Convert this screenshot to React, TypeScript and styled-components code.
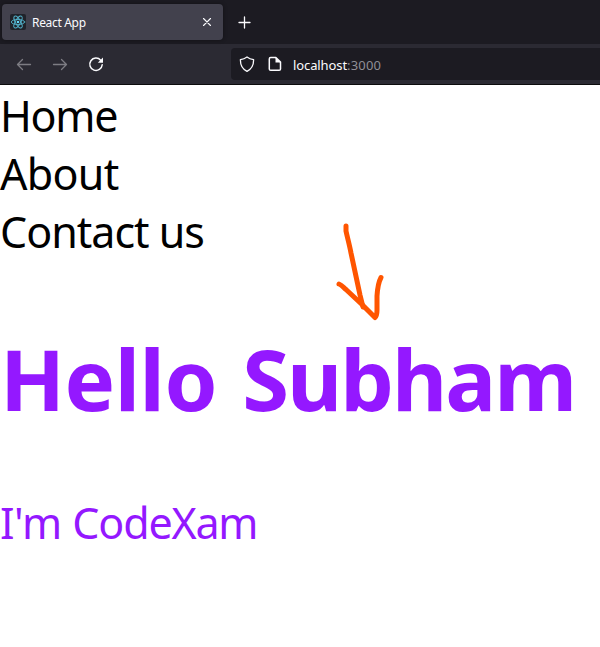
import React from "react";
import styled, { createGlobalStyle } from "styled-components";

const GlobalStyle = createGlobalStyle`
  * { box-sizing: border-box; }
  html, body { margin: 0; background: #fff; overflow: hidden; }
`;

const Window = styled.div`
  position: relative;
  width: 600px;
  height: 647px;
  overflow: hidden;
  background: #fff;
  font-family: "Noto Sans", "Open Sans", sans-serif;
`;

const TabStrip = styled.div`
  display: flex;
  align-items: center;
  height: 44px;
  background: #1c1b22;
`;

const Tab = styled.div`
  display: flex;
  align-items: center;
  width: 221px;
  height: 36px;
  margin-left: 2px;
  padding: 0 8px;
  border-radius: 4px;
  background: #42414d;
  box-shadow: 0 0 4px rgba(0, 0, 0, 0.4);
`;

const TabTitle = styled.span`
  flex: 1;
  margin: 1px 0 0 6px;
  color: #fbfbfe;
  font-size: 12px;
  line-height: 16px;
  letter-spacing: -0.32px;
  white-space: nowrap;
`;

const Toolbar = styled.div`
  display: flex;
  align-items: center;
  height: 41px;
  padding-left: 16px;
  border-bottom: 1px solid #0c0c0d;
  background: #2b2a33;
`;

const NavButtons = styled.div`
  display: flex;
  flex: none;
  gap: 20px;
  width: 215px;
`;

const AddressBar = styled.div`
  display: flex;
  flex: 1;
  align-items: center;
  height: 32px;
  padding-left: 8px;
  border-radius: 4px 0 0 4px;
  background: #1c1b22;
`;

const Icon = styled.svg<{ $dim?: boolean; $gap?: number }>`
  display: block;
  flex: none;
  width: 16px;
  height: 16px;
  margin-left: ${(p) => p.$gap ?? 0}px;
  color: ${(p) => (p.$dim ? "#7d7c83" : "#fbfbfe")};
  fill: none;
  stroke: currentColor;
  stroke-width: 1.3;
  stroke-linecap: round;
  stroke-linejoin: round;
`;

const Url = styled.span`
  margin: 1px 0 0 10px;
  color: #fbfbfe;
  font-size: 13px;
  line-height: 18px;
  letter-spacing: -0.1px;
`;

const Port = styled.span`
  color: #8f8e96;
  letter-spacing: 0.2px;
`;

const Page = styled.main`
  padding-top: 2px;
`;

const Menu = styled.ul`
  margin: 0;
  padding: 0;
  list-style: none;
  color: #000;
`;

const MenuItem = styled.li<{ $spacing: number }>`
  height: 58px;
  font-size: 43px;
  line-height: 58px;
  letter-spacing: ${(p) => p.$spacing}px;
  white-space: nowrap;
`;

const Heading = styled.h1`
  height: 116px;
  margin: 59px 0 58px;
  color: #9418ff;
  font-size: 85px;
  font-weight: 700;
  line-height: 116px;
  letter-spacing: -2px;
  white-space: nowrap;
`;

const Word = styled.span<{ $spacing: number; $before?: number }>`
  margin-left: ${(p) => p.$before ?? 0}px;
  letter-spacing: ${(p) => p.$spacing}px;
`;

const Intro = styled.p`
  margin: 0;
  color: #9418ff;
  font-size: 43px;
  line-height: 58px;
  letter-spacing: -0.5px;
  white-space: nowrap;
`;

const Annotation = styled.svg`
  position: absolute;
  top: 215px;
  left: 330px;
  width: 60px;
  height: 115px;
  fill: none;
  stroke: #ff5500;
  stroke-width: 5;
  stroke-linecap: round;
  stroke-linejoin: round;
`;

const menu = [
  { label: "Home", spacing: -1.3 },
  { label: "About", spacing: -0.7 },
  { label: "Contact us", spacing: -1 },
];

export default function App() {
  return (
    <>
      <GlobalStyle />
      <Window>
        <TabStrip>
          <Tab>
            <Icon viewBox="0 0 16 16">
              <rect width="16" height="16" rx="2" fill="#20232a" stroke="none" />
              <g stroke="#53b5ce" strokeWidth="0.9">
                <ellipse cx="8" cy="8" rx="6.7" ry="2.6" />
                <ellipse cx="8" cy="8" rx="6.7" ry="2.6" transform="rotate(60 8 8)" />
                <ellipse cx="8" cy="8" rx="6.7" ry="2.6" transform="rotate(120 8 8)" />
              </g>
              <circle cx="8" cy="8" r="1.3" fill="#61dafb" stroke="none" />
            </Icon>
            <TabTitle>React App</TabTitle>
            <Icon viewBox="0 0 16 16">
              <path d="M4.5 4.5l7 7M11.5 4.5l-7 7" strokeWidth="1.1" />
            </Icon>
          </Tab>
          <Icon viewBox="0 0 16 16" $gap={14}>
            <path d="M7.5 3v11M2 8.5h11" />
          </Icon>
        </TabStrip>
        <Toolbar>
          <NavButtons>
            <Icon viewBox="0 0 16 16" $dim>
              <path d="M14.5 8.5h-13M6.5 3.5l-5 5 5 5" />
            </Icon>
            <Icon viewBox="0 0 16 16" $dim>
              <path d="M1.5 8.5h13M9.5 3.5l5 5-5 5" />
            </Icon>
            <Icon viewBox="0 0 16 16">
              <path d="M12.7 4.2A6.2 6.2 0 1 0 14.2 8.8" strokeWidth="1.5" />
              <path d="M15 1.600v5.200H9.800z" fill="currentColor" stroke="none" />
            </Icon>
          </NavButtons>
          <AddressBar>
            <Icon viewBox="0 0 16 16">
              <path d="M8 .9c2 1.5 4.2 2.3 6.6 2.7C14.7 9 12.6 13 8 15.3 3.4 13 1.3 9 1.4 3.6 3.8 3.2 6 2.4 8 .9z" />
            </Icon>
            <Icon viewBox="0 0 16 16" $gap={12}>
              <path d="M3.7 1.6h5.2l4.6 4.5v6.8c0 .8-.6 1.4-1.4 1.4H3.7c-.8 0-1.4-.6-1.4-1.4V3c0-.8.6-1.4 1.4-1.4z" strokeWidth="1.5" />
              <path d="M8.5 1.5v5h5z" fill="currentColor" stroke="none" />
            </Icon>
            <Url>
              localhost<Port>:3000</Port>
            </Url>
          </AddressBar>
        </Toolbar>
        <Page>
          <Menu>
            {menu.map((item) => (
              <MenuItem key={item.label} $spacing={item.spacing}>
                {item.label}
              </MenuItem>
            ))}
          </Menu>
          <Heading>
            <Word $spacing={-0.5}>Hello</Word> <Word $spacing={-2} $before={5}>Subham</Word>
          </Heading>
          <Intro>
            <Word $spacing={-0.5}>I'm</Word> <Word $spacing={-1.2}>CodeXam</Word>
          </Intro>
        </Page>
        <Annotation viewBox="330 215 60 115">
          <path d="M346 226v5c1.500 7 3.500 14 5 22l9 42 3 12" />
          <path d="M339 284c3 1 4 3 7 5.500l16 15 13 13c2-2 2-4 2-7.500V296c.5-8 1-13 4-18.500" />
        </Annotation>
      </Window>
    </>
  );
}
